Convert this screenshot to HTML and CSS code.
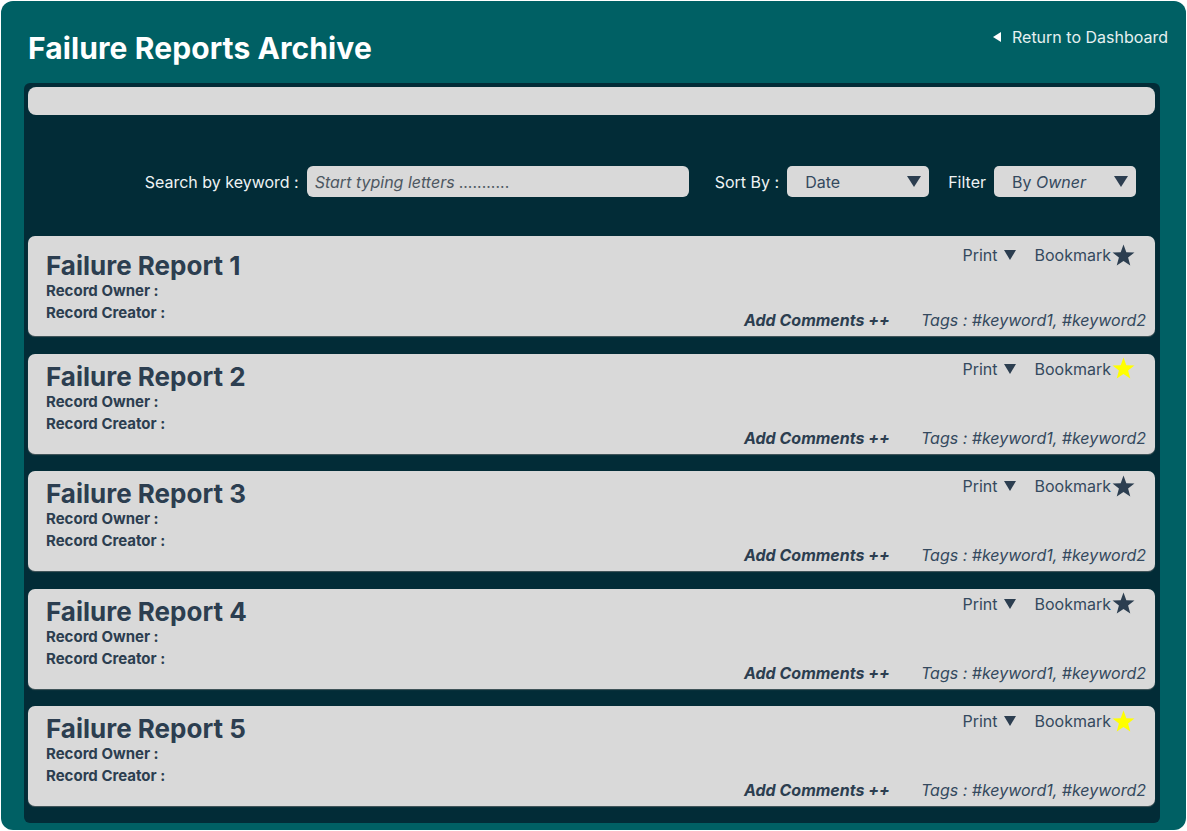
FILE: index.html
```html
<!DOCTYPE html>
<html>
<head>
<meta charset="utf-8">
<link rel="stylesheet" href="styles.css">
</head>
<body>
<div class="app">
  <header class="header">
    <h1 class="title">Failure Reports Archive</h1>
    <a class="back"><span class="back-arrow"></span>Return to Dashboard</a>
  </header>
  <main class="panel">
    <div class="topbar"></div>
    <div class="controls">
      <label class="ctl-label">Search by keyword :</label>
      <div class="search"><span class="placeholder">Start typing letters ...........</span></div>
      <label class="ctl-label sort-label">Sort By :</label>
      <div class="select"><span>Date</span><span class="caret"></span></div>
      <label class="ctl-label filter-label">Filter</label>
      <div class="select"><span>By <em>Owner</em></span><span class="caret"></span></div>
    </div>
    <div class="cards">
      <div class="card card-first">
        <div class="info">
          <h2 class="card-title">Failure Report 1</h2>
          <div class="meta">Record Owner :</div>
          <div class="meta">Record Creator :</div>
        </div>
        <div class="side">
          <div class="actions">
            <span class="print">Print <span class="caret-sm"></span></span>
            <span class="bookmark">Bookmark<svg class="star" viewBox="0 0 24 24"><polygon points="12,1.5 14.7,8.8 22.5,9.1 16.4,14 18.5,21.6 12,17.2 5.5,21.6 7.6,14 1.5,9.1 9.3,8.8" fill="#2c3e50"/></svg></span>
          </div>
          <div class="bottom">
            <span class="comments">Add Comments ++</span>
            <span class="tags">Tags : #keyword1, #keyword2</span>
          </div>
        </div>
      </div>
      <div class="card">
        <div class="info">
          <h2 class="card-title">Failure Report 2</h2>
          <div class="meta">Record Owner :</div>
          <div class="meta">Record Creator :</div>
        </div>
        <div class="side">
          <div class="actions">
            <span class="print">Print <span class="caret-sm"></span></span>
            <span class="bookmark">Bookmark<svg class="star" viewBox="0 0 24 24"><polygon points="12,1.5 14.7,8.8 22.5,9.1 16.4,14 18.5,21.6 12,17.2 5.5,21.6 7.6,14 1.5,9.1 9.3,8.8" fill="#ffff00"/></svg></span>
          </div>
          <div class="bottom">
            <span class="comments">Add Comments ++</span>
            <span class="tags">Tags : #keyword1, #keyword2</span>
          </div>
        </div>
      </div>
      <div class="card">
        <div class="info">
          <h2 class="card-title">Failure Report 3</h2>
          <div class="meta">Record Owner :</div>
          <div class="meta">Record Creator :</div>
        </div>
        <div class="side">
          <div class="actions">
            <span class="print">Print <span class="caret-sm"></span></span>
            <span class="bookmark">Bookmark<svg class="star" viewBox="0 0 24 24"><polygon points="12,1.5 14.7,8.8 22.5,9.1 16.4,14 18.5,21.6 12,17.2 5.5,21.6 7.6,14 1.5,9.1 9.3,8.8" fill="#2c3e50"/></svg></span>
          </div>
          <div class="bottom">
            <span class="comments">Add Comments ++</span>
            <span class="tags">Tags : #keyword1, #keyword2</span>
          </div>
        </div>
      </div>
      <div class="card">
        <div class="info">
          <h2 class="card-title">Failure Report 4</h2>
          <div class="meta">Record Owner :</div>
          <div class="meta">Record Creator :</div>
        </div>
        <div class="side">
          <div class="actions">
            <span class="print">Print <span class="caret-sm"></span></span>
            <span class="bookmark">Bookmark<svg class="star" viewBox="0 0 24 24"><polygon points="12,1.5 14.7,8.8 22.5,9.1 16.4,14 18.5,21.6 12,17.2 5.5,21.6 7.6,14 1.5,9.1 9.3,8.8" fill="#2c3e50"/></svg></span>
          </div>
          <div class="bottom">
            <span class="comments">Add Comments ++</span>
            <span class="tags">Tags : #keyword1, #keyword2</span>
          </div>
        </div>
      </div>
      <div class="card">
        <div class="info">
          <h2 class="card-title">Failure Report 5</h2>
          <div class="meta">Record Owner :</div>
          <div class="meta">Record Creator :</div>
        </div>
        <div class="side">
          <div class="actions">
            <span class="print">Print <span class="caret-sm"></span></span>
            <span class="bookmark">Bookmark<svg class="star" viewBox="0 0 24 24"><polygon points="12,1.5 14.7,8.8 22.5,9.1 16.4,14 18.5,21.6 12,17.2 5.5,21.6 7.6,14 1.5,9.1 9.3,8.8" fill="#ffff00"/></svg></span>
          </div>
          <div class="bottom">
            <span class="comments">Add Comments ++</span>
            <span class="tags">Tags : #keyword1, #keyword2</span>
          </div>
        </div>
      </div>
    </div>
  </main>
</div>
</body>
</html>
```
FILE: styles.css
```css
* { box-sizing: border-box; }
html, body { margin: 0; padding: 0; background: #ffffff; }
body { font-family: Inter, "Noto Sans", "Liberation Sans", sans-serif; }

.app {
  margin: 1px;
  width: 1185px;
  height: 829px;
  background: #006064;
  border-radius: 12px;
  display: flex;
  flex-direction: column;
  padding: 0 26px 7px 23px;
}

.header {
  display: flex;
  justify-content: space-between;
  align-items: flex-start;
  height: 82px;
  flex: none;
}
.title {
  margin: 30px 0 0 4px;
  font-size: 30px;
  line-height: 34px;
  font-weight: 700;
  color: #ffffff;
  letter-spacing: 0.1px;
}
.back {
  margin: 26px -8px 0 0;
  font-size: 16px;
  line-height: 20px;
  color: #e6f0f0;
  display: flex;
  align-items: center;
}
.back-arrow {
  width: 0; height: 0;
  border-top: 5.5px solid transparent;
  border-bottom: 5.5px solid transparent;
  border-right: 8px solid #ffffff;
  margin-right: 11px;
}

.panel {
  flex: 1;
  background: #022c37;
  border-radius: 6px;
  padding: 4px 5px 16px 4px;
  display: flex;
  flex-direction: column;
}
.topbar {
  height: 28px;
  background: #d9d9d9;
  border-radius: 8px;
}

.controls {
  display: flex;
  align-items: center;
  justify-content: flex-end;
  margin-top: 51px;
  padding-right: 19px;
  height: 31px;
}
.ctl-label {
  color: #eef3f4;
  font-size: 16px;
  margin-right: 8px;
}
.sort-label { margin-left: 26px; }
.filter-label { margin-left: 19px; margin-right: 8px; }
.search {
  width: 382px;
  height: 31px;
  background: #d9d9d9;
  border-radius: 6px;
  display: flex;
  align-items: center;
  padding-left: 8px;
}
.placeholder {
  font-style: italic;
  font-size: 16px;
  color: #4d5761;
}
.select {
  width: 142px;
  height: 31px;
  background: #d9d9d9;
  border-radius: 5px;
  display: flex;
  align-items: center;
  justify-content: space-between;
  padding: 0 8px 0 18px;
  font-size: 16px;
  color: #34495e;
}
.select em { font-style: italic; }
.caret {
  width: 0; height: 0;
  border-left: 7px solid transparent;
  border-right: 7px solid transparent;
  border-top: 11px solid #2c3e50;
}

.cards {
  margin-top: 39px;
  display: flex;
  flex-direction: column;
  gap: 17.5px;
}
.card {
  height: 100px;
  background: #d9d9d9;
  border-radius: 7px;
  box-shadow: 0 1px 1px rgba(120,120,120,0.6);
  display: flex;
  justify-content: space-between;
  padding: 3px 9px 6px 18px;
  color: #2c3e50;
}
.info { display: flex; flex-direction: column; }
.card-title {
  margin: 6px 0 0 0;
  font-size: 26px;
  line-height: 28px;
  font-weight: 700;
}
.card-first .card-title { margin-top: 13px; }
.card-first .actions { margin-top: 4px; }
.meta {
  font-size: 15px;
  line-height: 22px;
  font-weight: 700;
}
.side {
  display: flex;
  flex-direction: column;
  justify-content: space-between;
  align-items: flex-end;
}
.actions {
  display: flex;
  align-items: center;
  height: 24px;
  margin-right: 10px;
  font-size: 16px;
  color: #34495e;
}
.print { display: flex; align-items: center; }
.caret-sm {
  display: inline-block;
  width: 0; height: 0;
  border-left: 6.5px solid transparent;
  border-right: 6.5px solid transparent;
  border-top: 10px solid #2c3e50;
  margin-left: 6px;
}
.bookmark { display: flex; align-items: center; margin-left: 19px; }
.star { width: 25px; height: 25px; margin-left: 0; }
.bottom {
  display: flex;
  align-items: center;
  height: 20px;
  font-size: 16px;
}
.comments { font-weight: 700; font-style: italic; margin-right: 31px; }
.tags { font-style: italic; color: #34495e; }
```
